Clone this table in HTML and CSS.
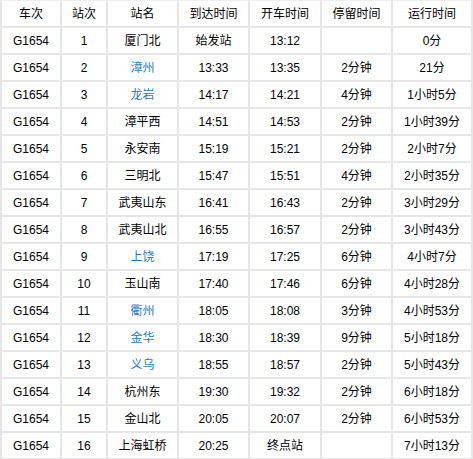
FILE: index.html
```html
<!DOCTYPE html>
<html lang="zh-CN">
<head>
<meta charset="utf-8">
<title>G1654</title>
<link rel="stylesheet" href="styles.css">
</head>
<body>
<table class="tt">
<colgroup>
<col class="c1"><col class="c2"><col class="c3"><col class="c4"><col class="c5"><col class="c6"><col class="c7">
</colgroup>
<thead>
<tr><th>车次</th><th>站次</th><th>站名</th><th>到达时间</th><th>开车时间</th><th>停留时间</th><th>运行时间</th></tr>
</thead>
<tbody>
<tr><td>G1654</td><td>1</td><td>厦门北</td><td>始发站</td><td>13:12</td><td></td><td>0分</td></tr>
<tr><td>G1654</td><td>2</td><td class="link">漳州</td><td>13:33</td><td>13:35</td><td>2分钟</td><td>21分</td></tr>
<tr><td>G1654</td><td>3</td><td class="link">龙岩</td><td>14:17</td><td>14:21</td><td>4分钟</td><td>1小时5分</td></tr>
<tr><td>G1654</td><td>4</td><td>漳平西</td><td>14:51</td><td>14:53</td><td>2分钟</td><td>1小时39分</td></tr>
<tr><td>G1654</td><td>5</td><td>永安南</td><td>15:19</td><td>15:21</td><td>2分钟</td><td>2小时7分</td></tr>
<tr><td>G1654</td><td>6</td><td>三明北</td><td>15:47</td><td>15:51</td><td>4分钟</td><td>2小时35分</td></tr>
<tr><td>G1654</td><td>7</td><td>武夷山东</td><td>16:41</td><td>16:43</td><td>2分钟</td><td>3小时29分</td></tr>
<tr><td>G1654</td><td>8</td><td>武夷山北</td><td>16:55</td><td>16:57</td><td>2分钟</td><td>3小时43分</td></tr>
<tr><td>G1654</td><td>9</td><td class="link">上饶</td><td>17:19</td><td>17:25</td><td>6分钟</td><td>4小时7分</td></tr>
<tr><td>G1654</td><td>10</td><td>玉山南</td><td>17:40</td><td>17:46</td><td>6分钟</td><td>4小时28分</td></tr>
<tr><td>G1654</td><td>11</td><td class="link">衢州</td><td>18:05</td><td>18:08</td><td>3分钟</td><td>4小时53分</td></tr>
<tr><td>G1654</td><td>12</td><td class="link">金华</td><td>18:30</td><td>18:39</td><td>9分钟</td><td>5小时18分</td></tr>
<tr><td>G1654</td><td>13</td><td class="link">义乌</td><td>18:55</td><td>18:57</td><td>2分钟</td><td>5小时43分</td></tr>
<tr><td>G1654</td><td>14</td><td>杭州东</td><td>19:30</td><td>19:32</td><td>2分钟</td><td>6小时18分</td></tr>
<tr><td>G1654</td><td>15</td><td>金山北</td><td>20:05</td><td>20:07</td><td>2分钟</td><td>6小时53分</td></tr>
<tr><td>G1654</td><td>16</td><td>上海虹桥</td><td>20:25</td><td>终点站</td><td></td><td>7小时13分</td></tr>
</tbody>
</table>
</body>
</html>
```
FILE: styles.css
```css
html, body {
  margin: 0;
  padding: 0;
  background: #fff;
}
.tt {
  border-collapse: collapse;
  table-layout: fixed;
  width: 472px;
  margin-left: 0;
  font-family: "Liberation Sans", "Noto Sans CJK SC", sans-serif;
  font-size: 12px;
  color: #000;
}
.c1 { width: 60px; }
.c2 { width: 46px; }
.c3 { width: 71px; }
.c4 { width: 71px; }
.c5 { width: 72px; }
.c6 { width: 71px; }
.c7 { width: 80px; }
.tt th, .tt td {
  border: 2px solid #e6e6e6;
  height: 25px;
  padding: 0;
  text-align: center;
  vertical-align: middle;
  font-weight: normal;
  line-height: 14px;
}
.tt thead th {
  border-top: 1px solid #eeeeee;
}
.tt .link {
  color: #1f77cc;
}
```
